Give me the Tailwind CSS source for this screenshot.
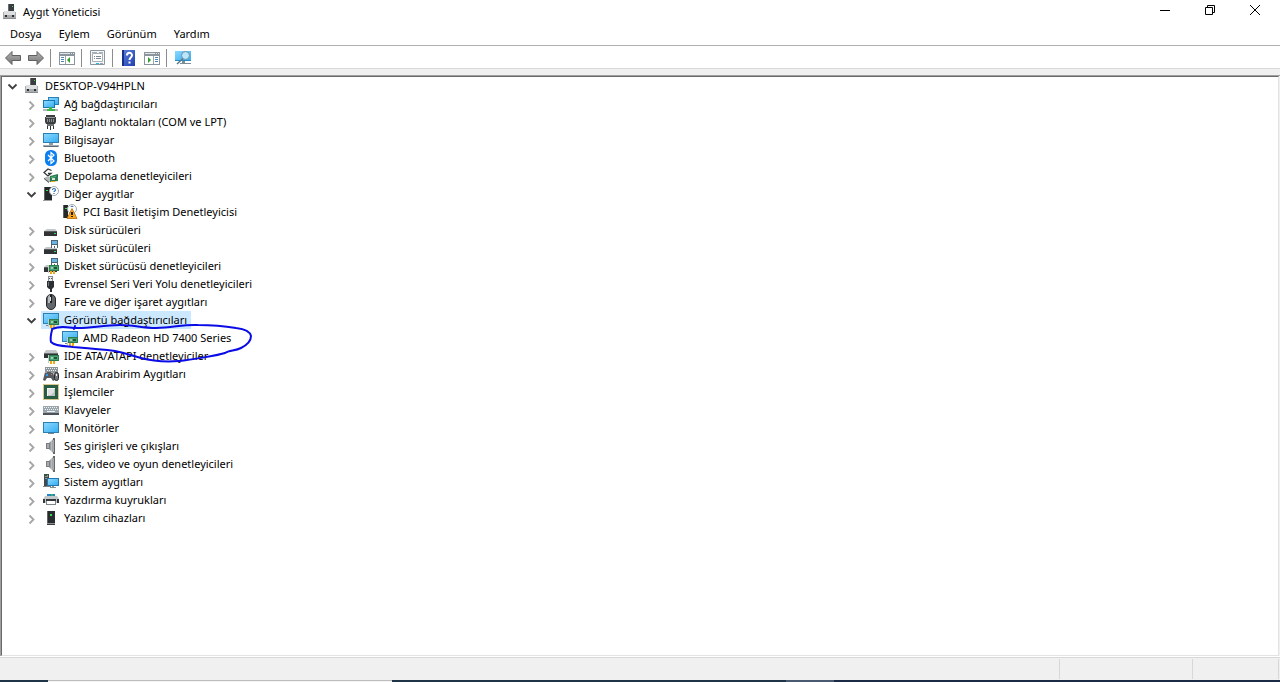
<!DOCTYPE html>
<html lang="tr">
<head>
    <meta charset="UTF-8">
    <meta name="viewport" content="width=device-width, initial-scale=1.0">
    <title>Aygıt Yöneticisi</title>
    <script src="https://cdn.jsdelivr.net/npm/@tailwindcss/browser@4"></script>
</head>
<body class="flex h-screen flex-col overflow-hidden bg-white font-['Noto_Sans','Open_Sans',sans-serif] text-[11px] leading-[18px] text-black">

    <!-- Icon sprite (kept rendered at zero size so the gradients resolve) -->
    <svg class="absolute size-0" aria-hidden="true" xmlns="http://www.w3.org/2000/svg">
        <defs>
            <linearGradient id="screenFill" x1="0" y1="0" x2="1" y2="1">
                <stop offset="0" stop-color="#8ad8ff"/>
                <stop offset="1" stop-color="#38aef2"/>
            </linearGradient>
            <linearGradient id="metal" x1="0" y1="0" x2="1" y2="0">
                <stop offset="0" stop-color="#6c7074"/>
                <stop offset=".5" stop-color="#b9bcbf"/>
                <stop offset="1" stop-color="#7b7f83"/>
            </linearGradient>
            <linearGradient id="arrowFill" x1="0" y1="0" x2="0" y2="1">
                <stop offset="0" stop-color="#b5b5b5"/>
                <stop offset="1" stop-color="#747474"/>
            </linearGradient>
            <linearGradient id="helpFill" x1="0" y1="0" x2="1" y2="1">
                <stop offset="0" stop-color="#5d80dc"/>
                <stop offset="1" stop-color="#1f3fae"/>
            </linearGradient>
        </defs>
        <symbol id="i-computer" viewBox="0 0 16 16">
            <path fill="#6a6d70" d="M6 0h6v8H6z"/>
            <path fill="#3a3d3f" d="M7 0h5v7H7z"/>
            <path fill="#35e04a" d="M10 2h1v1h-1z"/>
            <path fill="#a9adb0" d="M1 8h13v7H1z"/>
            <path fill="#dcdedf" d="M2 7h11v4H2z"/>
            <path fill="#8b8f92" d="M1 14h13v1H1z"/>
            <path fill="#2b2d2f" d="M3 11h2v2H3zM10 11h2v2h-2z"/>
        </symbol>
        <symbol id="i-network" viewBox="0 0 16 16">
            <path fill="#2582b9" d="M5 1h11v8H5z"/>
            <path fill="url(#screenFill)" d="M6 2h9v6H6z"/>
            <path fill="#1c78b0" d="M0 4h12v8H0z"/>
            <path fill="url(#screenFill)" d="M1 5h10v6H1z"/>
            <path fill="#39b54a" d="M6 11h3v2H6zM4 13h8v2H4z"/>
            <path fill="#b6babd" d="M0 13h4v2H0zM12 13h3v2h-3z"/>
        </symbol>
        <symbol id="i-port" viewBox="0 0 16 16">
            <path fill="#3c3f41" d="M3 1h9v2h1v5l-1 2H3L2 8V3h1z"/>
            <path fill="#95999c" d="M3 3h9v1H3z"/>
            <path fill="#8c9194" d="M4 5h1v3H4zM6 5h1v3H6zM8 5h1v3H8zM10 5h1v3h-1z"/>
            <path fill="#6c7073" d="M4 10h7v2H4z"/>
            <path fill="#303335" d="M4 12h1v3H4zM7 12h1v4H7zM10 12h1v3h-1z"/>
        </symbol>
        <symbol id="i-monitor" viewBox="0 0 16 16">
            <path fill="#2a80b5" d="M0 2h16v11H0z"/>
            <path fill="url(#screenFill)" d="M1 3h14v9H1z"/>
            <path fill="#7d868c" d="M5 13h6v1H5z"/>
        </symbol>
        <symbol id="i-pc" viewBox="0 0 16 16">
            <path fill="#2a80b5" d="M0 1h16v10H0z"/>
            <path fill="url(#screenFill)" d="M1 2h14v8H1z"/>
            <path fill="#8c9ba5" d="M6 11h4v2H6z"/>
            <path fill="#a4acb2" d="M0 13h16v2H0z"/>
            <path fill="#5f6b73" d="M1 14h14v1H1z"/>
        </symbol>
        <symbol id="i-bluetooth" viewBox="0 0 16 16">
            <rect x="2" y="0" width="12" height="16" rx="5.500" fill="#0a7ff0"/>
            <path fill="none" stroke="#fff" stroke-width="1.200" d="M5 5l6 6-3 2.500v-11L11 5l-6 6"/>
        </symbol>
        <symbol id="i-board" viewBox="0 0 16 16">
            <path fill="#c3cbc6" d="M5 7h1v8H5z"/>
            <path fill="#2c7a50" d="M6 7h10v6H6z"/>
            <path fill="#4aa474" d="M7 8h8v4H7z"/>
            <path fill="#a4ccb4" d="M8 9h2v2H8z"/>
            <path fill="#1c5637" d="M11 9h3v2h-3z"/>
            <path fill="#f0a818" d="M7 13h2v3H7zM10 13h2v3h-2z"/>
        </symbol>
        <symbol id="i-storage" viewBox="0 0 16 16">
            <path fill="none" stroke="#34383b" stroke-width="1.300" d="M8.500 2.500L5 1 1 4.500 5 8l3-2.500H5"/>
            <path fill="#b5babd" d="M1 10l4-2 4 2v4H5z"/>
            <path fill="#3d4244" d="M1 10l5 4v1l-5-4z"/>
            <path fill="#2c7a50" d="M7 8l8-2v7l-8 1z"/>
            <path fill="#55b77e" d="M8 9l5-1v1l-5 1z"/>
            <path fill="#d5e6db" d="M9 10h3v2H9z"/>
            <path fill="#f0a818" d="M8 13h4v1H8z"/>
        </symbol>
        <symbol id="i-unknown" viewBox="0 0 16 16">
            <path fill="#25282a" d="M1 1h8v13H1z"/>
            <path fill="#5f6467" d="M1 1h1v13H1z"/>
            <path fill="#35e04a" d="M3 4h2v1H3z"/>
            <path fill="#9b9fa2" d="M0 14h9v1H0z"/>
            <circle cx="11" cy="5" r="4.500" fill="#fff" stroke="#a4a9ad"/>
            <path fill="none" stroke="#2c6fbc" stroke-width="1.200" d="M9.500 4c0-2 3-2 3 0 0 1-1.500 1-1.500 2M11 7v1"/>
        </symbol>
        <symbol id="i-warning" viewBox="0 0 16 16">
            <path fill="#25282a" d="M1 1h5v13H1z"/>
            <path fill="#5f6467" d="M1 1h1v13H1z"/>
            <path fill="#35e04a" d="M3 4h2v1H3z"/>
            <circle cx="10" cy="5" r="4.500" fill="#fff" stroke="#a4a9ad"/>
            <path fill="none" stroke="#2c6fbc" d="M8.500 3c0-1 3-1 3 0"/>
            <path fill="#f7a91c" stroke="#b96b06" stroke-width=".8" d="M10 4.500l5 10H5z"/>
            <path fill="#28200f" d="M9 8h2v3H9zM9 12h2v1H9z"/>
        </symbol>
        <symbol id="i-disk" viewBox="0 0 16 16">
            <path fill="#c3c7c9" d="M4 7h8l2 2H1z"/>
            <path fill="#2f3335" d="M1 9h13v5H1z"/>
            <path fill="#565b5e" d="M1 9h13v1H1z"/>
            <path fill="#35e04a" d="M11 11h2v1h-2z"/>
        </symbol>
        <symbol id="i-floppy" viewBox="0 0 16 16">
            <path fill="#4c6478" d="M8 0h7v8H8z"/>
            <path fill="#68b5e6" d="M9 1h5v3H9z"/>
            <path fill="#fff" d="M9 5h5v3H9z"/>
            <path fill="#4c6478" d="M11 6h1v2h-1z"/>
            <path fill="#c3c7c9" d="M3 7h5v1h6v1H1z"/>
            <path fill="#2f3335" d="M1 9h13v5H1z"/>
            <path fill="#565b5e" d="M1 9h13v1H1z"/>
            <path fill="#35e04a" d="M11 11h2v1h-2z"/>
        </symbol>
        <symbol id="i-floppy-ctrl" viewBox="0 0 16 16">
            <use href="#i-floppy"/>
            <use href="#i-board"/>
        </symbol>
        <symbol id="i-usb" viewBox="0 0 16 16">
            <path fill="#8b8f92" d="M5 0h5v5H5z"/>
            <path fill="#e9ebec" d="M6 1h3v4H6z"/>
            <path fill="#54585b" d="M6 2h1v1H6zM8 2h1v1H8z"/>
            <path fill="#2d3032" d="M4 5h7v6l-2 2v3H7v-3H6l-2-2z"/>
            <path fill="#74797c" d="M5 6h1v4H5z"/>
        </symbol>
        <symbol id="i-mouse" viewBox="0 0 16 16">
            <rect x="3.500" y=".5" width="9" height="15" rx="4.500" fill="#62676b" stroke="#25282a"/>
            <path fill="#b5babd" d="M5 4c0-2 1-3 2-3v8H5z"/>
            <path fill="#1c1e20" d="M7 1h2v8H7z"/>
            <path fill="#dfe3e5" d="M7 3h1v4H7z"/>
        </symbol>
        <symbol id="i-display" viewBox="0 0 16 16">
            <path fill="#2a80b5" d="M0 1h16v11H0z"/>
            <path fill="url(#screenFill)" d="M1 2h14v9H1z"/>
            <path fill="#7d868c" d="M3 13h3v1H3z"/>
            <use href="#i-board"/>
        </symbol>
        <symbol id="i-ide" viewBox="0 0 16 16">
            <path fill="#c3c7c9" d="M3 2h10l2 3H1z"/>
            <path fill="#2f3335" d="M1 5h14v5H1z"/>
            <path fill="#6d7275" d="M1 5h14v1H1z"/>
            <use href="#i-board"/>
        </symbol>
        <symbol id="i-hid" viewBox="0 0 16 16">
            <path fill="#8f969b" d="M2 1h13v6H2z"/>
            <path stroke="#edf0f1" stroke-dasharray="1 1" d="M3 2.500h11M4 4.500h10"/>
            <path fill="#555b60" d="M2 6h8l2 8-2 1-2-3H4l-2 3-2-1z"/>
            <path fill="#9ca2a6" d="M2 6h2v1H2zM8 6h2v1H8z"/>
            <path fill="#2fa0ee" d="M3 8h2v2H3z"/>
            <path fill="#ee6b35" d="M8 8h1v1H8z"/>
            <rect x="11.500" y="6.500" width="4" height="8" rx="2" fill="#73797d" stroke="#26292b"/>
            <path fill="#f0f2f3" d="M13 8h1v2h-1z"/>
        </symbol>
        <symbol id="i-cpu" viewBox="0 0 16 16">
            <path fill="#285c43" d="M1 1h14v14H1z"/>
            <rect x=".5" y=".5" width="15" height="15" fill="none" stroke="#b58a1d" stroke-dasharray="1 1"/>
            <path fill="#f3f4f4" d="M4 4h8v8H4z"/>
            <path fill="#bfc3c4" d="M5 5h7v7H5z"/>
            <path fill="#dfe1e1" d="M5 5h6v3l-3 3H5z"/>
        </symbol>
        <symbol id="i-keyboard" viewBox="0 0 16 16">
            <path fill="#9ba5ac" d="M0 4h16v7H0z"/>
            <path stroke="#eef2f4" stroke-dasharray="1 1" d="M1 5.500h14M2 7.500h13"/>
            <path fill="#eef2f4" d="M4 9h8v1H4z"/>
            <path fill="#4c5358" d="M0 11h16v2H0z"/>
        </symbol>
        <symbol id="i-speaker" viewBox="0 0 16 16">
            <path fill="#777c80" d="M3 5h3v6H3z"/>
            <path fill="#a7abae" d="M4 6h2v4H4z"/>
            <path fill="url(#metal)" d="M6 5l5-5v16l-5-5z"/>
            <path fill="#63686b" d="M10 0h2v16h-2z"/>
            <path fill="#a7abae" d="M10 2h1v12h-1z"/>
        </symbol>
        <symbol id="i-system" viewBox="0 0 16 16">
            <path fill="#44494c" d="M1 0h5v12H1z"/>
            <path fill="#90969a" d="M2 2h3v1H2zM2 4h3v1H2z"/>
            <path fill="#35e04a" d="M4 1h1v1H4z"/>
            <path fill="#7b8287" d="M0 12h8v1H0z"/>
            <path fill="#1f78b1" d="M4 4h12v8H4z"/>
            <path fill="url(#screenFill)" d="M5 5h10v6H5z"/>
            <path fill="#829199" d="M9 12h2v1H9zM7 13h6v1H7z"/>
        </symbol>
        <symbol id="i-printer" viewBox="0 0 16 16">
            <path fill="#2382d3" d="M4 2h8v3H4z"/>
            <path fill="#33b450" d="M8 2h2v2H8z"/>
            <path fill="#c3c8ca" d="M2 4h12l2 3v4H0V7z"/>
            <path fill="#35393b" d="M0 7h2v4H0zM14 7h2v4h-2zM3 7h10v2H3z"/>
            <path fill="#7d8488" d="M3 9h10v4H3z"/>
            <path fill="#fff" d="M4 9h8v3H4z"/>
        </symbol>
        <symbol id="i-software" viewBox="0 0 16 16">
            <path fill="#292c2e" d="M4 1h8v12H4z"/>
            <path fill="#616568" d="M4 1h1v12H4z"/>
            <path fill="#35e04a" d="M7 4h2v2H7z"/>
            <path fill="#8d9194" d="M4 13h8v2H4z"/>
            <path fill="#3c3f41" d="M4 14h8v1H4z"/>
        </symbol>
        <symbol id="i-back" viewBox="0 0 16 16">
            <path fill="url(#arrowFill)" stroke="#606060" stroke-linejoin="round" d="M.5 8L7 1.500v4h8.500v5H7v4z"/>
        </symbol>
        <symbol id="i-panel" viewBox="0 0 16 16">
            <path fill="#8a959d" d="M0 2h16v13H0z"/>
            <path fill="#dfe4e7" d="M1 3h10v1H1zM12 3h1v1h-1zM14 3h1v1h-1z"/>
            <path fill="#fff" d="M1 6h14v8H1z"/>
        </symbol>
    </svg>

    <!-- Title bar -->
    <header class="flex h-6 shrink-0 items-center pl-0.5">
        <svg class="size-4"><use href="#i-computer"/></svg>
        <h1 class="grow pl-[5px]">Aygıt Yöneticisi</h1>
        <div class="flex h-full items-start pr-[3px]">
            <button class="flex h-5 w-[45px] items-center justify-center" aria-label="Simge durumuna küçült">
                <svg class="size-3" viewBox="0 0 12 12"><path fill="#000" d="M1 6h10v1H1z"/></svg>
            </button>
            <button class="flex h-5 w-[45px] items-center justify-center" aria-label="Önceki boyut">
                <svg class="size-3" viewBox="0 0 12 12" fill="none" stroke="#000"><path d="M1.500 3.500h7v7h-7zM3.500 3V1.500h7v7H9"/></svg>
            </button>
            <button class="flex h-5 w-[45px] items-center justify-center" aria-label="Kapat">
                <svg class="size-3" viewBox="0 0 12 12" fill="none" stroke="#000"><path d="M1 1l10 10M11 1L1 11"/></svg>
            </button>
        </div>
    </header>

    <!-- Menu bar -->
    <nav class="flex h-[22px] shrink-0 items-start gap-[17px] border-b border-[#b0b0b0] px-2.5 pt-px">
        <button>Dosya</button>
        <button>Eylem</button>
        <button>Görünüm</button>
        <button>Yardım</button>
    </nav>

    <!-- Toolbar -->
    <div class="flex h-[23px] shrink-0 items-center border-b border-[#d9d9d9] pl-[5px] pt-0.5" role="toolbar">
        <button aria-label="Geri"><svg class="size-4"><use href="#i-back"/></svg></button>
        <button class="ml-[7px] -scale-x-100" aria-label="İleri"><svg class="size-4"><use href="#i-back"/></svg></button>
        <span class="mx-1.5 h-[18px] w-px bg-[#8d8d8d]"></span>
        <button class="ml-0.5" aria-label="Konsol ağacını göster">
            <svg class="size-4" viewBox="0 0 16 16">
                <use href="#i-panel"/>
                <path fill="#9aa4aa" d="M6 6h1v8H6z"/>
                <path fill="#4b86b3" d="M2 7h3v1H2zM2 9h3v1H2zM2 11h3v1H2z"/>
                <path fill="#2ba32b" d="M11 7v6l-3-3z"/>
            </svg>
        </button>
        <span class="mx-1.5 h-[18px] w-px bg-[#8d8d8d]"></span>
        <button class="ml-0.5" aria-label="Özellikler">
            <svg class="size-4" viewBox="0 0 16 16">
                <path fill="#f4f6f7" stroke="#8a959d" d="M.5.5h14v14H.5z"/>
                <path fill="#fff" stroke="#a7b0b6" d="M2.500 3.500h10v8h-10z"/>
                <path fill="#a7b0b6" d="M2 2h5v1H2zM9 2h4v1H9z"/>
                <path fill="#7c878e" d="M4 6h1v1H4zM6 6h5v1H6zM4 8h1v1H4zM6 8h5v1H6z"/>
                <path fill="#29b9e6" d="M6 13h3v1H6z"/>
                <path fill="#9aa4aa" d="M10 13h3v1h-3z"/>
            </svg>
        </button>
        <span class="mx-1.5 h-[18px] w-px bg-[#8d8d8d]"></span>
        <button class="ml-0.5" aria-label="Yardım">
            <svg class="size-4" viewBox="0 0 16 16">
                <path fill="url(#helpFill)" d="M1 0h13v16H1z"/>
                <path fill="#17308b" d="M1 0h2v16H1z"/>
                <path fill="none" stroke="#fff" stroke-width="2" d="M6 5.500C6 2 11 2 11 5.300 11 7.500 8.500 7.500 8.500 10M8.500 11.500v2"/>
            </svg>
        </button>
        <button class="ml-[7px]" aria-label="Eylem bölmesini göster">
            <svg class="size-4" viewBox="0 0 16 16">
                <use href="#i-panel"/>
                <path fill="#9aa4aa" d="M9 6h1v8H9z"/>
                <path fill="#4b86b3" d="M11 7h3v1h-3zM11 9h3v1h-3zM11 11h3v1h-3z"/>
                <path fill="#2ba32b" d="M4 7v6l3-3z"/>
            </svg>
        </button>
        <span class="mx-1.5 h-[18px] w-px bg-[#8d8d8d]"></span>
        <button class="ml-0.5" aria-label="Donanım değişikliklerini tara">
            <svg class="size-4" viewBox="0 0 16 16">
                <path fill="#2d8dc2" d="M0 1h16v10H0z"/>
                <path fill="url(#screenFill)" d="M0 1h16v9H0z"/>
                <path fill="#7c8d98" d="M7 11h3v2H7zM5 13h11v1H5z"/>
                <circle cx="10.500" cy="5.500" r="4" fill="#b9e6fb" stroke="#6b8fa3"/>
                <path stroke="#587b90" stroke-width="1.600" d="M8 8.500L2 14"/>
            </svg>
        </button>
    </div>

    <!-- Device tree -->
    <main class="flex min-h-0 grow flex-col bg-[#f0f0f0] pt-1.5">
        <div class="grow overflow-hidden border-l border-t border-[#a0a0a0] pr-px">
            <div class="relative h-full border border-b-[#e3e3e3] border-l-[#696969] border-r-[#e3e3e3] border-t-[#696969] bg-white">
                <ul id="deviceTree" role="tree" aria-label="Aygıtlar"></ul>
                <!-- Pen mark round the display adapter -->
                <svg class="pointer-events-none absolute left-0 top-0 h-[300px] w-[260px]" viewBox="2 77 260 300" fill="none" stroke="#0b0be6" stroke-width="2" stroke-linecap="round" stroke-linejoin="round">
                    <path d="M75 326l-1 3M52 329c9-3 14-2 22-1 14 1 28-3 46-3 14 0 22 3 36 3 16 0 28-4 42-3 14 0 26 1 38 3 8 1 14 3 15 8 0 6-4 9-10 12-6 3-12 2-16 5-6 2-34 7-46 8-14 1-27 0-38-3-11-3-15-5-26-7-15-2-29-3-42-4-10-1-18-1-22-5-1-4 0-8 1-12"/>
                </svg>
            </div>
        </div>
    </main>

    <!-- Status bar -->
    <footer class="mt-px flex h-[23px] shrink-0 border-t border-[#d7d7d7] bg-[#f0f0f0] pb-px pr-px pt-px">
        <span class="grow border-r border-[#d7d7d7]"></span>
        <span class="w-[133px] border-r border-[#d7d7d7]"></span>
        <span class="w-[86px] border-r border-[#d7d7d7]"></span>
    </footer>
    <div class="flex h-0.5 shrink-0 bg-[#1b2b45]">
        <span class="w-12 bg-[#1f3446]"></span>
        <span class="w-[344px] border-t border-[#bdbdbd] bg-[#f3f3f3]"></span>
        <span class="w-[394px] bg-[#1f3446]"></span>
        <span class="w-12 bg-[#4a5a70]"></span>
    </div>

    <script>
        const deviceTree = document.getElementById('deviceTree');

        // [level, state, icon, label]
        const devices = [
            [0, 'open', 'computer', 'DESKTOP-V94HPLN'],
            [1, 'closed', 'network', 'Ağ bağdaştırıcıları'],
            [1, 'closed', 'port', 'Bağlantı noktaları (COM ve LPT)'],
            [1, 'closed', 'pc', 'Bilgisayar'],
            [1, 'closed', 'bluetooth', 'Bluetooth'],
            [1, 'closed', 'storage', 'Depolama denetleyicileri'],
            [1, 'open', 'unknown', 'Diğer aygıtlar'],
            [2, 'leaf', 'warning', 'PCI Basit İletişim Denetleyicisi'],
            [1, 'closed', 'disk', 'Disk sürücüleri'],
            [1, 'closed', 'floppy', 'Disket sürücüleri'],
            [1, 'closed', 'floppy-ctrl', 'Disket sürücüsü denetleyicileri'],
            [1, 'closed', 'usb', 'Evrensel Seri Veri Yolu denetleyicileri'],
            [1, 'closed', 'mouse', 'Fare ve diğer işaret aygıtları'],
            [1, 'open', 'display', 'Görüntü bağdaştırıcıları'],
            [2, 'leaf', 'display', 'AMD Radeon HD 7400 Series'],
            [1, 'closed', 'ide', 'IDE ATA/ATAPI denetleyiciler'],
            [1, 'closed', 'hid', 'İnsan Arabirim Aygıtları'],
            [1, 'closed', 'cpu', 'İşlemciler'],
            [1, 'closed', 'keyboard', 'Klavyeler'],
            [1, 'closed', 'monitor', 'Monitörler'],
            [1, 'closed', 'speaker', 'Ses girişleri ve çıkışları'],
            [1, 'closed', 'speaker', 'Ses, video ve oyun denetleyicileri'],
            [1, 'closed', 'system', 'Sistem aygıtları'],
            [1, 'closed', 'printer', 'Yazdırma kuyrukları'],
            [1, 'closed', 'software', 'Yazılım cihazları']
        ];
        const selected = 'Görüntü bağdaştırıcıları';

        const indents = ['pl-0.5', 'pl-[21px]', 'pl-[40px]'];
        const chevrons = {
            open: '<path stroke="#404040" d="M4.500 6.500l4 4 4-4"/>',
            closed: '<path stroke="#a6a6a6" d="M6.500 5.500l4 4-4 4"/>',
            leaf: ''
        };

        devices.forEach(([level, state, icon, label]) => {
            const row = document.createElement('li');
            row.className = `flex h-[18px] items-center gap-0.5 ${indents[level]}`;
            row.setAttribute('role', 'treeitem');
            row.setAttribute('aria-level', level + 1);
            row.innerHTML = `
                <svg class="size-4" viewBox="0 0 16 16" fill="none" stroke-width="1.800">${chevrons[state]}</svg>
                <button class="flex h-[18px] items-center gap-[5px] pl-0.5 pr-1 ${label === selected ? 'bg-[#cce8ff]' : ''}">
                    <svg class="size-4"><use href="#i-${icon}"/></svg>
                    <span class="whitespace-nowrap">${label}</span>
                </button>
            `;
            deviceTree.appendChild(row);
        });
    </script>
</body>
</html>
